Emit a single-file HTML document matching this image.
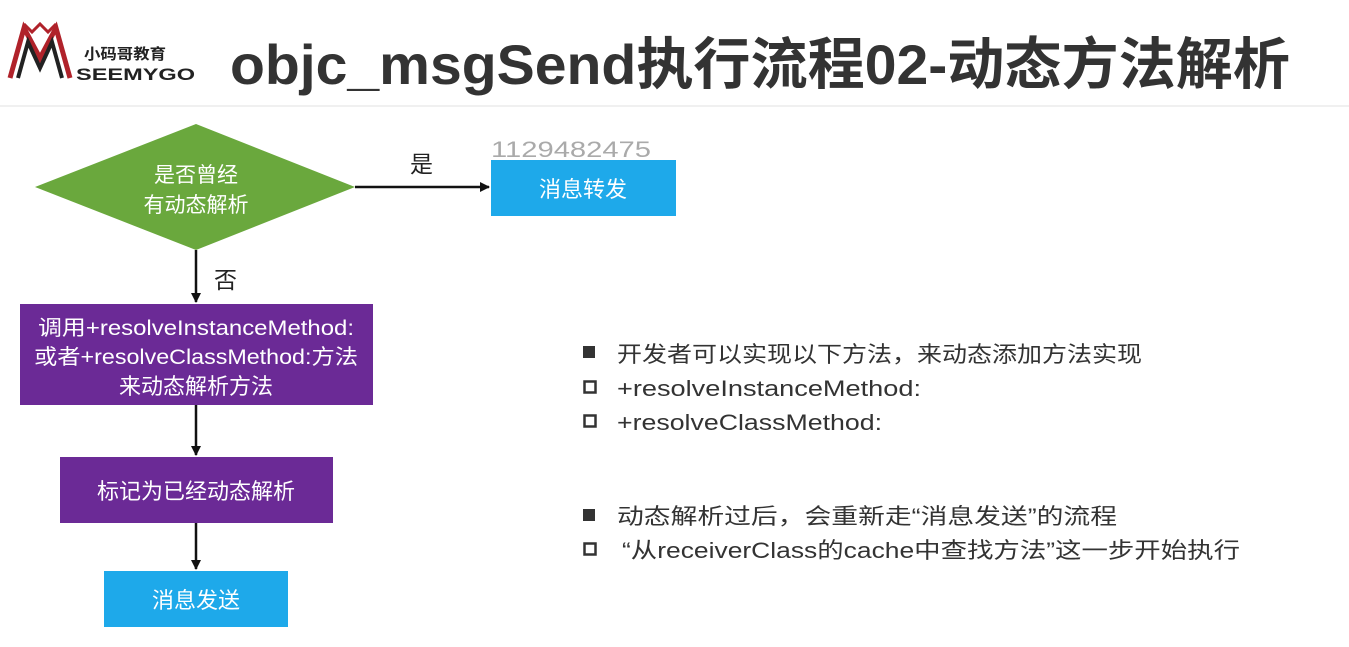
<!DOCTYPE html>
<html><head><meta charset="utf-8"><style>
html,body{margin:0;padding:0;background:#fff;width:1349px;height:647px;overflow:hidden}
svg{display:block}
text{font-family:"Liberation Sans","Noto Sans CJK SC",sans-serif}
</style></head><body>
<svg width="1349" height="647" viewBox="0 0 1349 647" xmlns="http://www.w3.org/2000/svg">
<defs>
<marker id="ar" markerWidth="10" markerHeight="10" refX="9" refY="5" orient="auto" markerUnits="userSpaceOnUse"><path d="M0,0 L10,5 L0,10 Z" fill="#111"/></marker>
</defs>
<line x1="0" y1="106" x2="1349" y2="106" stroke="#f0f0f0" stroke-width="2"/>
<!-- logo -->
<g fill="none" stroke-linejoin="miter">
<path d="M10,78 L24,28 L40,58 L56,28 L70,78" stroke="#b0222a" stroke-width="5"/>
<path d="M18,78 L28,42 L40,68 L52,42 L62,78" stroke="#222" stroke-width="4"/>
<path d="M24,24 L32,32 L40,24 L48,32 L56,24" stroke="#b0222a" stroke-width="3"/>
</g>
<text x="84" y="59" font-size="15" font-weight="bold" fill="#222" textLength="82" lengthAdjust="spacingAndGlyphs">小码哥教育</text>
<text x="76" y="80" font-size="17" font-weight="bold" fill="#222" textLength="119" lengthAdjust="spacingAndGlyphs">SEEMYGO</text>
<text x="230" y="84" font-size="56" font-weight="bold" fill="#333" textLength="1060" lengthAdjust="spacingAndGlyphs">objc_msgSend执行流程02-动态方法解析</text>
<!-- diamond -->
<polygon points="196,124 355,187 196,250 35,187" fill="#6aa83d"/>
<text x="196" y="182" font-size="21" fill="#fff" text-anchor="middle">是否曾经</text>
<text x="196" y="212" font-size="21" fill="#fff" text-anchor="middle">有动态解析</text>
<line x1="355" y1="187" x2="489" y2="187" stroke="#111" stroke-width="2.5" marker-end="url(#ar)"/>
<text x="410" y="172" font-size="23" fill="#222">是</text>
<text x="491" y="157" font-size="22" fill="#aaa" textLength="160" lengthAdjust="spacingAndGlyphs">1129482475</text>
<rect x="491" y="160" width="185" height="56" fill="#1ea9ea"/>
<text x="583" y="197" font-size="22" fill="#fff" text-anchor="middle">消息转发</text>
<line x1="196" y1="250" x2="196" y2="302" stroke="#111" stroke-width="2.5" marker-end="url(#ar)"/>
<text x="214" y="288" font-size="23" fill="#222">否</text>
<rect x="20" y="304" width="353" height="101" fill="#6b2a96"/>
<text x="196" y="335" font-size="21" fill="#fff" text-anchor="middle" textLength="316" lengthAdjust="spacingAndGlyphs">调用+resolveInstanceMethod:</text>
<text x="196" y="364" font-size="21" fill="#fff" text-anchor="middle" textLength="324" lengthAdjust="spacingAndGlyphs">或者+resolveClassMethod:方法</text>
<text x="196" y="394" font-size="22" fill="#fff" text-anchor="middle">来动态解析方法</text>
<line x1="196" y1="405" x2="196" y2="455" stroke="#111" stroke-width="2.5" marker-end="url(#ar)"/>
<rect x="60" y="457" width="273" height="66" fill="#6b2a96"/>
<text x="196" y="499" font-size="22" fill="#fff" text-anchor="middle">标记为已经动态解析</text>
<line x1="196" y1="523" x2="196" y2="569" stroke="#111" stroke-width="2.5" marker-end="url(#ar)"/>
<rect x="104" y="571" width="184" height="56" fill="#1ea9ea"/>
<text x="196" y="608" font-size="22" fill="#fff" text-anchor="middle">消息发送</text>
<!-- bullets -->
<g fill="#333">
<rect x="583" y="346" width="12" height="12"/>
<rect x="584.5" y="381.5" width="11" height="11" fill="none" stroke="#333" stroke-width="2.5"/>
<rect x="584.5" y="415.5" width="11" height="11" fill="none" stroke="#333" stroke-width="2.5"/>
<rect x="583" y="509" width="12" height="12"/>
<rect x="584.5" y="543.5" width="11" height="11" fill="none" stroke="#333" stroke-width="2.5"/>
<text x="617" y="362" font-size="22" textLength="525" lengthAdjust="spacingAndGlyphs">开发者可以实现以下方法，来动态添加方法实现</text>
<text x="617" y="396" font-size="22" textLength="304" lengthAdjust="spacingAndGlyphs">+resolveInstanceMethod:</text>
<text x="617" y="430" font-size="22" textLength="265" lengthAdjust="spacingAndGlyphs">+resolveClassMethod:</text>
<text x="617" y="524" font-size="22" textLength="500" lengthAdjust="spacingAndGlyphs">动态解析过后，会重新走“消息发送”的流程</text>
<text x="622" y="558" font-size="22" textLength="618" lengthAdjust="spacingAndGlyphs">“从receiverClass的cache中查找方法”这一步开始执行</text>
</g>
</svg>
</body></html>
